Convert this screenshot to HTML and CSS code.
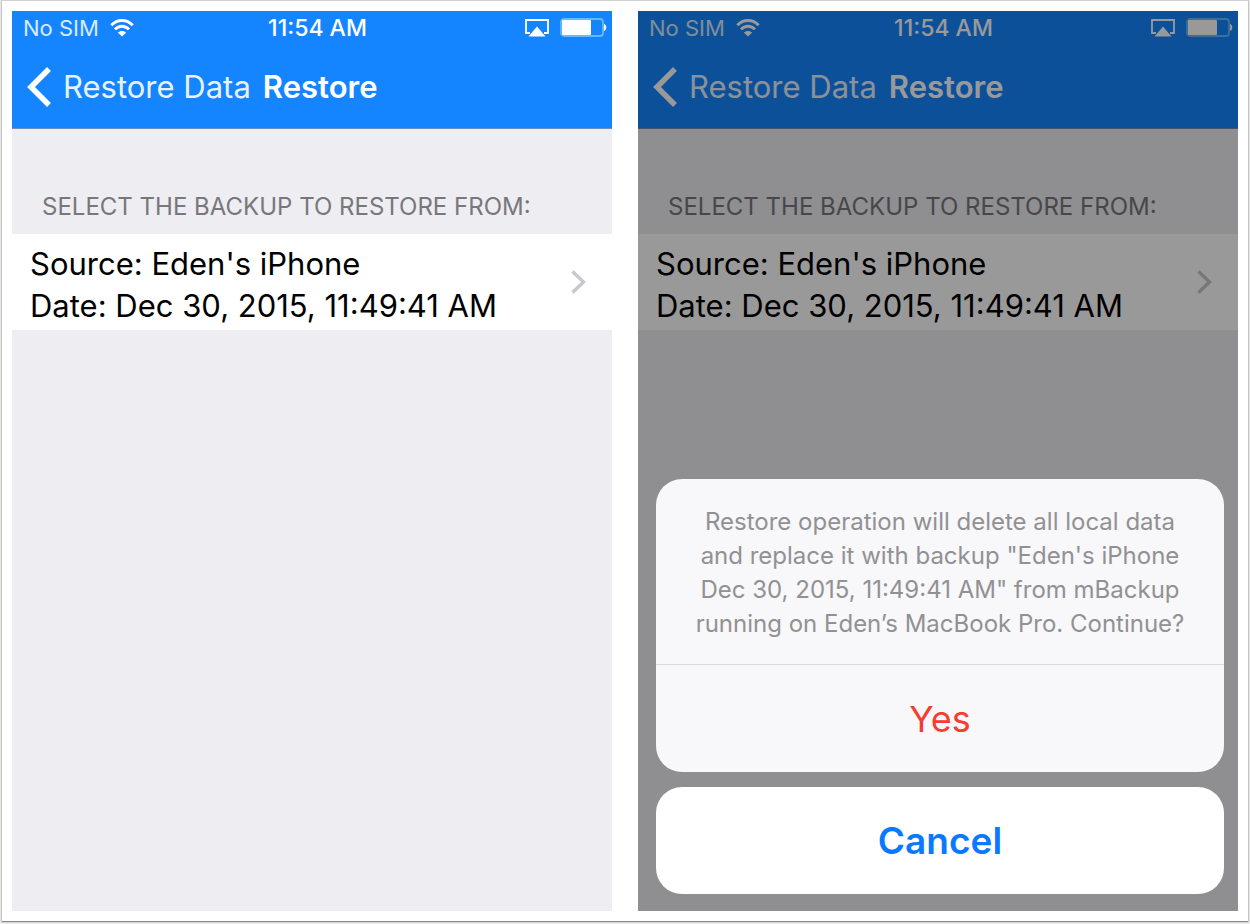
FILE: index.html
```html
<!DOCTYPE html>
<html lang="en">
<head>
<meta charset="utf-8">
<meta name="viewport" content="width=device-width, initial-scale=1">
<title>Restore</title>
<link rel="stylesheet" href="styles.css">
</head>
<body>
<svg class="defs" aria-hidden="true">
  <symbol id="wifi" viewBox="0 0 24 18">
    <path d="M1.300 6.200C7.300-.1 16.700-.1 22.700 6.200" fill="none" stroke="currentColor" stroke-width="2.800"/>
    <path d="M5 10.400c4-4.200 10-4.200 14 0" fill="none" stroke="currentColor" stroke-width="2.800"/>
    <path d="M12 17.500 7.800 13.500c2.400-2.100 6-2.100 8.400 0z" fill="currentColor"/>
  </symbol>
  <symbol id="airplay" viewBox="0 0 24 18">
    <path d="M5 14H1V1h22v13h-4" fill="none" stroke="currentColor" stroke-width="1.800"/>
    <path d="M12 7.500 20.500 17.500h-17z" fill="currentColor"/>
  </symbol>
  <symbol id="battery" viewBox="0 0 47 19">
    <rect x="1" y="1" width="42" height="17" rx="3" fill="none" stroke="#64bbff" stroke-width="1.800"/>
    <rect x="2" y="2" width="29" height="15" rx="1" fill="currentColor"/>
    <path d="M44 6c3 .5 3 6.500 0 7z" fill="currentColor"/>
  </symbol>
  <symbol id="back" viewBox="0 0 26 40">
    <path d="M23 2 5 20l18 18" fill="none" stroke="currentColor" stroke-width="5.500"/>
  </symbol>
  <symbol id="chevron" viewBox="0 0 15 24">
    <path d="M1.500 1.500 12.500 12 1.500 22.500" fill="none" stroke="currentColor" stroke-width="3.300"/>
  </symbol>
</svg>

<main class="frame">
  <section class="phone">
    <header class="bar">
      <div class="status">
        <div class="carrier">No SIM <svg class="wifi"><use href="#wifi"/></svg></div>
        <time class="clock">11:54 AM</time>
        <div class="power"><svg class="airplay"><use href="#airplay"/></svg><svg class="battery"><use href="#battery"/></svg></div>
      </div>
      <nav class="nav">
        <a class="back" href="#"><svg class="back-icon"><use href="#back"/></svg>Restore Data</a>
        <h1 class="title">Restore</h1>
      </nav>
    </header>
    <h2 class="section-title">SELECT THE BACKUP TO RESTORE FROM:</h2>
    <a class="row" href="#">
      <span class="row-text">Source: Eden's iPhone<br>Date: Dec 30, 2015, 11:49:41 AM</span>
      <svg class="chevron"><use href="#chevron"/></svg>
    </a>
  </section>

  <section class="phone">
    <header class="bar">
      <div class="status">
        <div class="carrier">No SIM <svg class="wifi"><use href="#wifi"/></svg></div>
        <time class="clock">11:54 AM</time>
        <div class="power"><svg class="airplay"><use href="#airplay"/></svg><svg class="battery"><use href="#battery"/></svg></div>
      </div>
      <nav class="nav">
        <a class="back" href="#"><svg class="back-icon"><use href="#back"/></svg>Restore Data</a>
        <h1 class="title">Restore</h1>
      </nav>
    </header>
    <h2 class="section-title">SELECT THE BACKUP TO RESTORE FROM:</h2>
    <a class="row" href="#">
      <span class="row-text">Source: Eden's iPhone<br>Date: Dec 30, 2015, 11:49:41 AM</span>
      <svg class="chevron"><use href="#chevron"/></svg>
    </a>
    <div class="overlay">
      <div class="sheet" role="dialog" aria-labelledby="message">
        <p class="message" id="message">Restore operation will delete all local data<br>and replace it with backup "Eden's iPhone<br>Dec 30, 2015, 11:49:41 AM" from mBackup<br>running on Eden’s MacBook Pro. Continue?</p>
        <button class="action destructive" type="button">Yes</button>
      </div>
      <button class="action cancel" type="button">Cancel</button>
    </div>
  </section>
</main>
</body>
</html>
```
FILE: styles.css
```css
* {
  box-sizing: border-box;
}

body {
  display: flex;
  min-height: 100vh;
  margin: 0;
  padding: 1px 2px 3px;
  background: #ececec;
  font-family: Inter, "Liberation Sans", sans-serif;
}

.defs {
  position: absolute;
  width: 0;
  height: 0;
}

.frame {
  display: flex;
  flex: 1;
  gap: 26px;
  padding: 10px;
  background: #fff;
  box-shadow: 0 1px 1px #888, 0 0 1px 1px #d0d0d0;
}

.phone {
  position: relative;
  display: flex;
  flex: 1;
  flex-direction: column;
  background: #eeedf2;
}

.bar {
  border-bottom: 1px solid #6a8fc0;
  background: #1585ff;
  color: #fff;
}

.status {
  display: grid;
  grid-template-columns: 1fr auto 1fr;
  align-items: center;
  height: 33px;
  padding-left: 11px;
  font-size: 22px;
}

.carrier {
  display: flex;
  align-items: center;
  gap: 11px;
  color: #d8ebff;
}

.wifi {
  width: 24px;
  height: 18px;
  color: #fff;
}

.clock {
  font-size: 23px;
  font-weight: 500;
}

.power {
  display: flex;
  align-items: center;
  justify-content: flex-end;
  gap: 11px;
  padding-right: 5px;
}

.airplay {
  width: 24px;
  height: 18px;
}

.battery {
  width: 47px;
  height: 19px;
}

.nav {
  display: flex;
  align-items: center;
  gap: 12px;
  height: 84px;
  padding: 1px 14px 0;
  font-size: 31px;
}

.back {
  display: flex;
  align-items: center;
  gap: 11px;
  color: #e6f2ff;
  text-decoration: none;
}

.back-icon {
  width: 26px;
  height: 40px;
  color: #fff;
}

.title {
  margin: 0;
  font-size: 31px;
  font-weight: 600;
}

.section-title {
  margin: 0;
  padding: 62px 30px 11px;
  color: #77777c;
  font-size: 24px;
  font-weight: 400;
  line-height: 32px;
}

.row {
  display: flex;
  align-items: center;
  justify-content: space-between;
  padding: 0 26px 0 18px;
  background: #fff;
  color: #000;
  font-size: 31px;
  line-height: 42px;
  text-decoration: none;
}

.row-text {
  padding: 9px 0 3px;
}

.chevron {
  width: 15px;
  height: 24px;
  color: #c7c7cc;
}

.overlay {
  position: absolute;
  inset: 0;
  display: flex;
  flex-direction: column;
  justify-content: flex-end;
  gap: 15px;
  padding: 17px 14px 17px 18px;
  background: rgb(0 0 0 / 40%);
}

.sheet {
  overflow: hidden;
  border-radius: 26px;
  background: #f8f7f9;
}

.message {
  margin: 0;
  padding: 26px 20px 23px;
  border-bottom: 1px solid #dcdbe0;
  color: #919194;
  font-size: 24px;
  line-height: 34px;
  text-align: center;
}

.action {
  display: block;
  width: 100%;
  height: 107px;
  padding: 0;
  border: 0;
  background: transparent;
  font-family: inherit;
  font-size: 36px;
}

.destructive {
  color: #f53d31;
}

.cancel {
  border-radius: 26px;
  background: #fff;
  color: #0a78ff;
  font-size: 37px;
  font-weight: 600;
}
```
